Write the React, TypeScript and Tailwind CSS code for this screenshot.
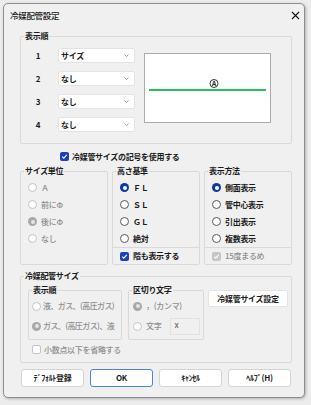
import React from "react";

const Radio = ({ checked = false, disabled = false }: { checked?: boolean; disabled?: boolean }) => {
  if (checked) {
    return (
      <span
        className={`flex h-[9px] w-[9px] shrink-0 items-center justify-center rounded-full ${
          disabled ? "bg-[#a8a8a8]" : "bg-[#0b3aa8]"
        }`}
      >
        <span className={`h-[4px] w-[4px] rounded-full ${disabled ? "bg-[#e6e6e6]" : "bg-white"}`} />
      </span>
    );
  }
  return (
    <span
      className={`h-[9px] w-[9px] shrink-0 rounded-full border bg-white ${
        disabled ? "border-[#c4c4c4]" : "border-[#5a5a5a]"
      }`}
    />
  );
};

const Check = ({ checked = false, disabled = false }: { checked?: boolean; disabled?: boolean }) => {
  if (!checked) {
    return <span className="h-[9px] w-[9px] shrink-0 rounded-[2px] border border-[#c4c4c4] bg-white" />;
  }
  return (
    <span
      className={`flex h-[9px] w-[9px] shrink-0 items-center justify-center rounded-[2px] ${
        disabled ? "bg-[#c6c6c6]" : "bg-[#1d3fbd]"
      }`}
    >
      <svg width="7" height="7" viewBox="0 0 7 7">
        <polyline points="1.2,3.6 2.8,5.2 5.8,1.8" fill="none" stroke="white" strokeWidth="1.1" />
      </svg>
    </span>
  );
};

const Select = ({ value }: { value: string }) => (
  <div className="flex h-[15px] w-[77px] items-center justify-between rounded-[2px] border border-[#e4e4e4] bg-white pl-[2px] pr-[5px]">
    <span>{value}</span>
    <svg width="5" height="3" viewBox="0 0 5 3">
      <polyline points="0.5,0.5 2.5,2.5 4.5,0.5" fill="none" stroke="#8a8a8a" strokeWidth="0.8" />
    </svg>
  </div>
);

const Group = ({
  label,
  className,
  children,
}: {
  label: string;
  className?: string;
  children: React.ReactNode;
}) => (
  <fieldset className={`rounded-[2px] border border-[#d9d9d9] ${className ?? ""}`}>
    <legend className="ml-[3px] px-[1px] leading-[12px]">{label}</legend>
    {children}
  </fieldset>
);

const RadioRow = ({
  label,
  checked,
  disabled,
}: {
  label: string;
  checked?: boolean;
  disabled?: boolean;
}) => (
  <div className="flex h-[17px] items-center gap-[4px] pl-[7px]">
    <Radio checked={checked} disabled={disabled} />
    <span className={disabled ? "font-medium text-[#8e8e8e]" : ""}>{label}</span>
  </div>
);

const Button = ({ label, focused = false }: { label: string; focused?: boolean }) => (
  <button
    className={`h-[18px] w-[63px] rounded-[3px] border bg-white leading-none ${
      focused ? "border-[#4a86d8]" : "border-[#d4d4d4]"
    }`}
  >
    {label}
  </button>
);

export default function App() {
  return (
    <div className="h-[405px] w-[311px] bg-[#ececec] pl-[3px] pt-[3px] font-['Noto_Sans_CJK_JP',sans-serif] text-[8px] font-bold tracking-[-0.3px] text-[#1b1b1b]">
      <div className="flex h-[395px] w-[302px] flex-col rounded-[5px] border border-[#8e8e8e] bg-[#f0f0f0] shadow-[1px_1px_3px_rgba(0,0,0,0.25)]">
        {/* title bar */}
        <div className="flex h-[22px] items-center justify-between pl-[6px] pr-[4px]">
          <span className="text-[8.5px] font-medium">冷媒配管設定</span>
          <svg width="9" height="9" viewBox="0 0 9 9">
            <path d="M1 1 L8 8 M8 1 L1 8" stroke="#111" strokeWidth="1.1" />
          </svg>
        </div>

        <div className="flex flex-col pl-[16px]">
          {/* 表示順 */}
          <Group label="表示順" className="mt-[4px] w-[272px]">
            <div className="flex items-start pb-[11px]">
              <div className="flex flex-col gap-[8px] pl-[12px] pt-[6px]">
                {["サイズ", "なし", "なし", "なし"].map((v, i) => (
                  <div key={i} className="flex items-center">
                    <span className="w-[10px] text-center">{i + 1}</span>
                    <span className="ml-[15px]">
                      <Select value={v} />
                    </span>
                  </div>
                ))}
              </div>
              <div className="ml-[9px] mt-[11px] h-[70px] w-[127px] border border-[#ababab] bg-white">
                <svg width="125" height="68" viewBox="0 0 125 68">
                  <line x1="4" y1="36" x2="121" y2="36" stroke="#22c35e" strokeWidth="2" />
                  <circle cx="69" cy="29.5" r="4" fill="white" stroke="#333" strokeWidth="1" />
                  <text x="69" y="32" fontSize="6.5" fontWeight="bold" textAnchor="middle" fill="#111">
                    A
                  </text>
                </svg>
              </div>
            </div>
          </Group>

          {/* symbol checkbox */}
          <div className="ml-[40px] mt-[8px] flex h-[9px] items-center gap-[3px]">
            <Check checked />
            <span>冷媒管サイズの記号を使用する</span>
          </div>

          {/* three groups */}
          <div className="mt-[4px] flex w-[272px] gap-[4px]">
            <Group label="サイズ単位" className="w-[88px]">
              <div className="pt-[2px]">
                <RadioRow label="Ａ" disabled />
                <RadioRow label="前にΦ" disabled />
                <RadioRow label="後にΦ" checked disabled />
                <RadioRow label="なし" disabled />
              </div>
            </Group>
            <Group label="高さ基準" className="w-[88px]">
              <div className="pt-[2px]">
                <RadioRow label="ＦＬ" checked />
                <RadioRow label="ＳＬ" />
                <RadioRow label="ＧＬ" />
                <RadioRow label="絶対" />
              </div>
              <div className="flex h-[17px] items-center gap-[4px] border-t border-[#d9d9d9] pl-[7px]">
                <Check checked />
                <span>階も表示する</span>
              </div>
            </Group>
            <Group label="表示方法" className="w-[88px]">
              <div className="pt-[2px]">
                <RadioRow label="側面表示" checked />
                <RadioRow label="管中心表示" />
                <RadioRow label="引出表示" />
                <RadioRow label="複数表示" />
              </div>
              <div className="flex h-[17px] items-center gap-[4px] border-t border-[#d9d9d9] pl-[7px]">
                <Check checked disabled />
                <span className="font-medium text-[#8e8e8e]">15度まるめ</span>
              </div>
            </Group>
          </div>

          {/* 冷媒配管サイズ */}
          <Group label="冷媒配管サイズ" className="mt-[5px] w-[272px]">
            <div className="flex items-start pl-[7px] pt-[2px]">
              <Group label="表示順" className="w-[94px]">
                <div className="pb-[3px] pl-[3px]">
                  <div className="flex h-[20px] items-center gap-[2px] whitespace-nowrap">
                    <Radio disabled />
                    <span className="tracking-[-0.6px] font-medium text-[#8e8e8e]">液、ガス、(高圧ガス)</span>
                  </div>
                  <div className="flex h-[20px] items-center gap-[2px] whitespace-nowrap">
                    <Radio checked disabled />
                    <span className="tracking-[-0.6px] font-medium text-[#8e8e8e]">ガス、(高圧ガス)、液</span>
                  </div>
                </div>
              </Group>
              <Group label="区切り文字" className="ml-[6px] w-[76px]">
                <div className="pb-[3px] pl-[4px]">
                  <div className="flex h-[20px] items-center gap-[4px] whitespace-nowrap">
                    <Radio checked disabled />
                    <span className="font-medium text-[#8e8e8e]">，(カンマ)</span>
                  </div>
                  <div className="flex h-[20px] items-center gap-[4px] whitespace-nowrap">
                    <Radio disabled />
                    <span className="font-medium text-[#8e8e8e]">文字</span>
                    <div className="ml-[5px] h-[17px] w-[30px] shrink-0 border border-[#e2e2e2] pl-[3px] pt-[1px] leading-[9px] font-medium text-[#6a6a6a]">
                      x
                    </div>
                  </div>
                </div>
              </Group>
              <button className="ml-[4px] mt-[6px] h-[17px] w-[80px] rounded-[2px] border border-[#e4e4e4] bg-white leading-none">
                冷媒管サイズ設定
              </button>
            </div>
            <div className="ml-[11px] mt-[5px] flex h-[9px] items-center gap-[3px]">
              <Check />
              <span className="font-medium text-[#8e8e8e]">小数点以下を省略する</span>
            </div>
            <div className="h-[8px]" />
          </Group>

          {/* buttons */}
          <div className="ml-[1px] mt-[6px] flex w-[270px] justify-between">
            <Button label="ﾃﾞﾌｫﾙﾄ登録" />
            <Button label="OK" focused />
            <Button label="ｷｬﾝｾﾙ" />
            <Button label="ﾍﾙﾌﾟ(H)" />
          </div>
        </div>
      </div>
    </div>
  );
}
